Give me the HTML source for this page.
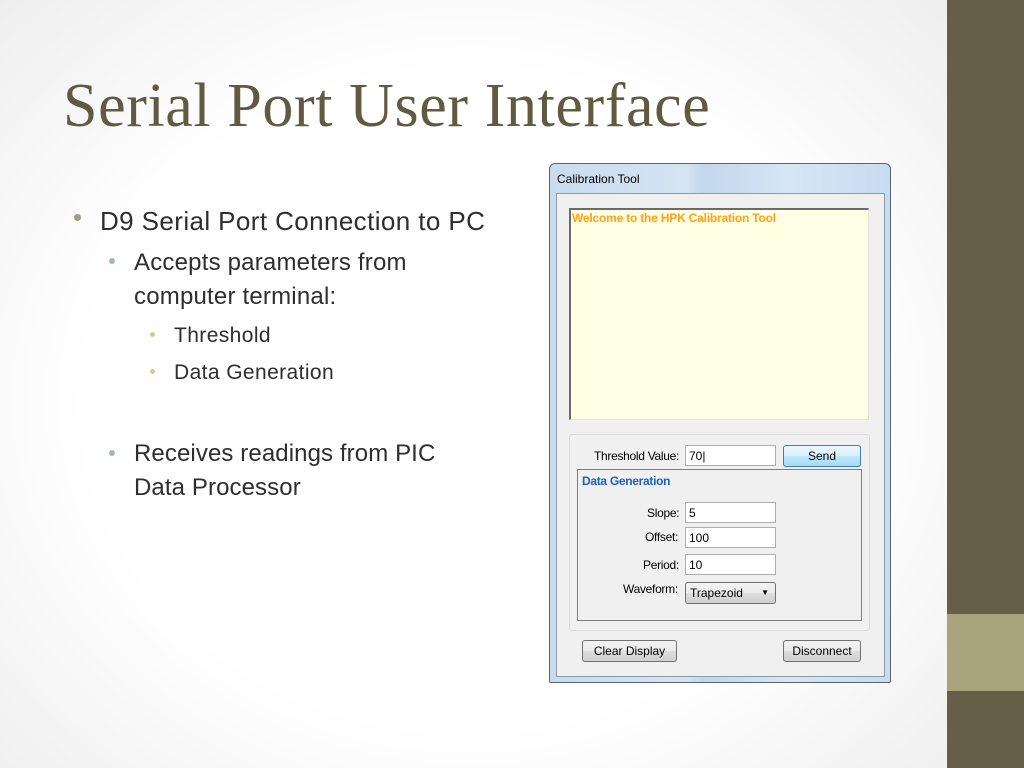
<!DOCTYPE html>
<html><head><meta charset="utf-8"><style>
*{margin:0;padding:0;box-sizing:border-box}
body{width:1024px;height:768px;overflow:hidden;position:relative;font-family:"Liberation Sans",sans-serif;
background:radial-gradient(ellipse 700px 600px at 470px 400px,#ffffff 55%,#ececec 100%);}
.a{position:absolute;white-space:nowrap;line-height:1}
.band{position:absolute;left:947px;top:0;width:77px;height:768px;background:#665e47}
.band2{position:absolute;left:947px;top:614px;width:77px;height:77px;background:#a9a47c}
.title{left:63px;top:75px;font-family:"Liberation Serif",serif;font-size:62px;letter-spacing:0.6px;color:#5f5a40}
.t{color:#2e2e2e}
.dot{position:absolute;border-radius:50%}
.w{position:absolute;left:549px;top:163px;width:342px;height:520px;border:1px solid #5a6470;border-radius:6px 6px 2px 2px;
background:linear-gradient(90deg,#c9dcee 0%,#d4e4f3 40%,#c2d7ec 45%,#d6e6f5 70%,#c8dcf0 100%)}
.cl{position:absolute;left:556px;top:193px;width:329px;height:484px;background:#f0f0f0;border:1px solid #8d99a6}
.f{font-size:12px;color:#000}
.tb{position:absolute;background:#fff;border:1px solid #abadb3;font-size:12px;padding:3px 3px;line-height:14px}
.btn{position:absolute;border:1px solid #707070;border-radius:3px;background:linear-gradient(#f2f2f2,#ebebeb 50%,#dddddd 51%,#cfcfcf);font-size:12px;text-align:center;line-height:20px}
</style></head><body>
<div class="band"></div><div class="band2"></div>
<div class="a title">Serial Port User Interface</div>

<div class="dot" style="left:74px;top:214px;width:7px;height:7px;background:#a09d84"></div>
<div class="a t" style="left:100px;top:208px;font-size:26px;letter-spacing:0.4px">D9 Serial Port Connection to PC</div>
<div class="dot" style="left:109px;top:258px;width:6px;height:6px;background:#a3b9b6"></div>
<div class="a t" style="left:134px;top:251px;font-size:24px;letter-spacing:0.2px">Accepts parameters from</div>
<div class="a t" style="left:134px;top:285px;font-size:24px;letter-spacing:0.2px">computer terminal:</div>
<div class="dot" style="left:150px;top:332px;width:5px;height:5px;background:#d1c98a"></div>
<div class="a t" style="left:174px;top:325px;font-size:21px;letter-spacing:0.4px">Threshold</div>
<div class="dot" style="left:150px;top:369px;width:5px;height:5px;background:#d1c98a"></div>
<div class="a t" style="left:174px;top:362px;font-size:21px;letter-spacing:0.4px">Data Generation</div>
<div class="dot" style="left:109px;top:450px;width:6px;height:6px;background:#a3b9b6"></div>
<div class="a t" style="left:134px;top:442px;font-size:24px;letter-spacing:0.1px">Receives readings from PIC</div>
<div class="a t" style="left:134px;top:476px;font-size:24px;letter-spacing:0.1px">Data Processor</div>

<div class="w"></div>
<div class="a f" style="left:557px;top:173px">Calibration Tool</div>
<div class="cl"></div>
<div style="position:absolute;left:569px;top:208px;width:300px;height:212px;background:#ffffe4;border:1px solid #e4e4e4;border-top:2px solid #6a6a6a;border-left:2px solid #6a6a6a"></div>
<div class="a" style="left:572px;top:212px;font-size:12px;font-weight:bold;color:#ffa21a;letter-spacing:-0.2px">Welcome to the HPK Calibration Tool</div>
<div style="position:absolute;left:569px;top:434px;width:301px;height:197px;border:1px solid #dcdcdc;border-radius:3px"></div>
<div class="a f" style="left:594px;top:450px;font-size:12px;letter-spacing:-0.3px">Threshold Value:</div>
<div class="tb" style="left:685px;top:445px;width:91px;height:21px">70|</div>
<div class="btn" style="left:783px;top:445px;width:78px;height:22px;border-color:#3c7fb1;background:linear-gradient(#eaf6fd,#d9f0fc 50%,#bee6fd 51%,#a7d9f5)">Send</div>
<div style="position:absolute;left:577px;top:469px;width:285px;height:152px;border:1px solid #7f7f7f"></div>
<div class="a" style="left:582px;top:475px;font-size:12px;font-weight:bold;color:#1e5fbf;letter-spacing:-0.3px">Data Generation</div>
<div class="a f" style="left:647px;top:507px;letter-spacing:-0.3px">Slope:</div>
<div class="tb" style="left:685px;top:502px;width:91px;height:21px">5</div>
<div class="a f" style="left:645px;top:531px;letter-spacing:-0.3px">Offset:</div>
<div class="tb" style="left:685px;top:527px;width:91px;height:21px">100</div>
<div class="a f" style="left:643px;top:559px;letter-spacing:-0.3px">Period:</div>
<div class="tb" style="left:685px;top:554px;width:91px;height:21px">10</div>
<div class="a f" style="left:623px;top:583px;letter-spacing:-0.3px">Waveform:</div>
<div class="btn" style="left:685px;top:582px;width:91px;height:22px;text-align:left;padding-left:4px">Trapezoid<span style="position:absolute;right:6px;top:0;font-size:8px">▼</span></div>
<div class="btn" style="left:582px;top:640px;width:95px;height:22px">Clear Display</div>
<div class="btn" style="left:783px;top:640px;width:78px;height:22px">Disconnect</div>
</body></html>
